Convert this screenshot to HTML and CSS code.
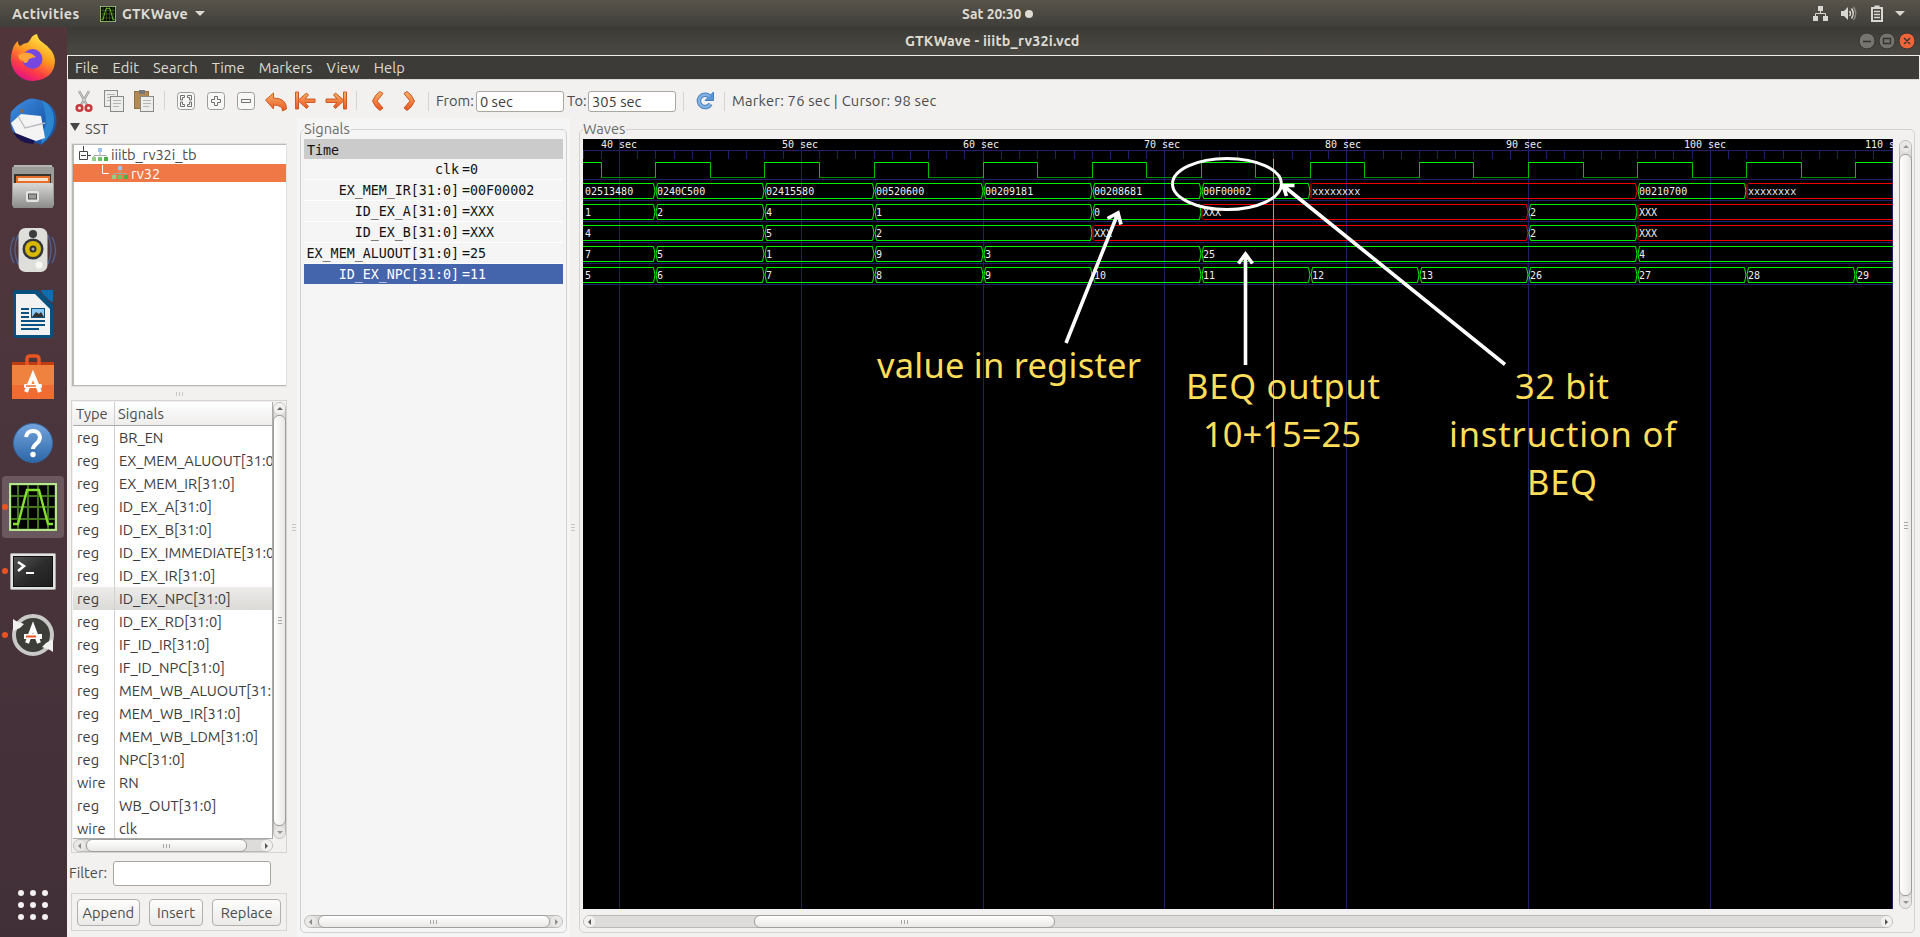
FILE: index.html
```html
<!DOCTYPE html>
<html lang="en">
<head>
<meta charset="utf-8">
<title>GTKWave - iiitb_rv32i.vcd</title>
<link rel="stylesheet" href="styles.css">
</head>
<body>
<svg class="defs" width="0" height="0">
  <defs>
    <linearGradient id="or" x1="0" y1="0" x2="0" y2="1"><stop offset="0" stop-color="#f6b26b"/><stop offset="1" stop-color="#ea5420"/></linearGradient>
    <linearGradient id="gy" x1="0" y1="0" x2="0" y2="1"><stop offset="0" stop-color="#d8d8d6"/><stop offset="1" stop-color="#8b8b89"/></linearGradient>
    <linearGradient id="fx" x1="0.8" y1="0" x2="0.3" y2="1"><stop offset="0" stop-color="#fff44f"/><stop offset=".45" stop-color="#ff9a1f"/><stop offset=".75" stop-color="#ff3b46"/><stop offset="1" stop-color="#e0108a"/></linearGradient>
    <linearGradient id="bl" x1="0" y1="0" x2="0" y2="1"><stop offset="0" stop-color="#74a4dc"/><stop offset="1" stop-color="#2c67a8"/></linearGradient>
    <linearGradient id="tb" x1="0" y1="0" x2="1" y2="1"><stop offset="0" stop-color="#3f8fe0"/><stop offset=".6" stop-color="#1f5fb4"/><stop offset="1" stop-color="#1a4a96"/></linearGradient>
    <linearGradient id="dk" x1="0" y1="0" x2="1" y2="1"><stop offset="0" stop-color="#555"/><stop offset=".5" stop-color="#2c2c2c"/><stop offset="1" stop-color="#1c1c1c"/></linearGradient>
    <g id="hier"><path d="M8 5v3M2 10V8.5h12V10" stroke="#aaa" fill="none"/><rect x="6" y="1" width="4" height="4" fill="#9cc4ee"/><rect x="0" y="10" width="4" height="4" fill="#90cf84"/><rect x="6" y="10" width="4" height="4" fill="#6fc463"/><rect x="12" y="10" width="4" height="4" fill="#4fae48"/></g>
    <g id="wave"><rect x="1" y="1" width="46" height="46" fill="#000" stroke="#b5e68c" stroke-width="2.4"/><path d="M9 2v44M19 2v44M29 2v44M39 2v44M2 13h44M2 24h44M2 36h44" stroke="#43761c" stroke-width="2"/><path d="M4 41h5L18 7h12l9 34h5" fill="none" stroke="#84e030" stroke-width="2.4"/></g>
  </defs>
</svg>

<header class="topbar">
  <span class="activities">Activities</span>
  <svg class="app-icon" width="16" height="16" viewBox="0 0 48 48"><use href="#wave"/></svg>
  <span class="app-name">GTKWave</span>
  <i class="caret"></i>
  <div class="clock">Sat 20:30<i class="dot"></i></div>
  <svg class="tray" width="100" height="20" viewBox="0 0 100 20">
    <g fill="#d9d7d2"><rect x="8" y="2" width="5" height="5"/><rect x="3" y="12" width="5" height="5"/><rect x="13" y="12" width="5" height="5"/><path d="M31 7h3l4-4v13l-4-4h-3z"/><path d="M85 7h10l-5 5z"/></g>
    <path d="M10.500 7v3M5.500 12v-2.500h10V12" fill="none" stroke="#d9d7d2"/>
    <path d="M39.500 7q2 2.500 0 5M41.500 4.500q3.500 5 0 10" fill="none" stroke="#d9d7d2" stroke-width="1.500"/><path d="M43.500 3q4.500 6.500 0 13" fill="none" stroke="#8a8882" stroke-width="1.500"/>
    <path d="M62 4h10v13H62zM64.500 2.500h5" fill="none" stroke="#d9d7d2" stroke-width="2"/><path d="M64 7.500h6M64 10.500h6M64 13.500h6" stroke="#d9d7d2" stroke-width="1.500"/>
  </svg>
</header>

<div class="desktop">
<nav class="dock">
  <div class="app"><svg width="48" height="48" viewBox="0 0 48 48">
    <path d="M24 47A22 22 0 0 1 3 18Q4 11 9 7q0 4 2 5q4-3 7-3q2-1 3-3q2-5 7-6q1 5 5 8q12 8 13 18q0 19-22 21z" fill="url(#fx)"/><circle cx="23.500" cy="25" r="10" fill="#7748e0"/><path d="M9 21q8-4 14-1l4 3q-5 1-7 2q-3 7-6 2q-5-1-5-6z" fill="#ffa436"/></svg></div>
  <div class="app"><svg width="48" height="48" viewBox="0 0 48 48">
    <path d="M2 14Q9 6 14 4q6-5 13-3q17 3 20 17q2 12-5 20q-4 5-10 9l-4-2Q-3 44 2 14z" fill="url(#tb)"/><path d="M33 2q12 7 12 19q0 16-13 25l2-12q6-10-1-32z" fill="#2c86cf"/><path d="M2 25l10-9 20 2 4 22-9 3L7 36z" fill="#f4f4f4"/><path d="M9 18l7 12 20-5" fill="none" stroke="#b9bcc0" stroke-width="1.300"/><path d="M4 34l22 9-2 3Q9 45 4 34z" fill="#1b1450"/><circle cx="13" cy="13" r="2" fill="#8a6a4a"/></svg></div>
  <div class="app"><svg width="48" height="48" viewBox="0 0 48 48">
    <path d="M5 3h38l2 13H3z" fill="#b5b5b3"/><rect x="3" y="5" width="42" height="39" rx="1" fill="#9a9a98"/><path d="M5 12h37v10H5z" fill="#3a342f"/><path d="M7 14h34v7H7z" fill="#e46f2c"/><path d="M9 16h30v3H9z" fill="#f6e2cf"/><rect x="4" y="21" width="40" height="25" rx="1" fill="url(#gy)"/><rect x="17" y="29" width="13" height="11" rx="2" fill="#e4e4e2"/><rect x="19.500" y="32" width="8" height="5" fill="#9b9b99" stroke="#555"/></svg></div>
  <div class="app"><svg width="48" height="48" viewBox="0 0 48 48">
    <path d="M5 11q-7 13 0 26M9 9q-6 14 0 29M43 11q7 13 0 26M39 9q6 14 0 29" fill="none" stroke="#4f5f8c" stroke-width="1.500"/><rect x="9.500" y="2" width="29" height="44" rx="7" fill="#dededb"/><circle cx="24" cy="23" r="10.500" fill="#34363a"/><circle cx="24" cy="23" r="8" fill="#d9b800"/><circle cx="24" cy="23" r="3.500" fill="#333"/><circle cx="24" cy="23" r="1.500" fill="#aaa"/><circle cx="30" cy="39" r="3.500" fill="#f7f7f5"/><circle cx="24" cy="8" r="4" fill="#3c3c3c"/></svg></div>
  <div class="app"><svg width="48" height="48" viewBox="0 0 48 48">
    <path d="M7 0h22l15 15v30q0 3-3 3H7q-3 0-3-3V3q0-3 3-3z" fill="#08507e"/><path d="M32 0h12v12q-2 0-4-2l-6-6q-2-2-2-4z" fill="#0e6fae"/><path d="M7 4h19l15 15v26H7z" fill="#f2f2f2"/><path d="M12 19h8M12 23h8M12 27h8M12 31h24M12 35h24M12 39h18" stroke="#0c5180" stroke-width="2"/><rect x="22.500" y="18.500" width="13" height="9" fill="#8dc8f2" stroke="#0c5180"/><path d="M23 27l4-5 3 2 2-2 3 5z" fill="#333"/></svg></div>
  <div class="app"><svg width="48" height="48" viewBox="0 0 48 48">
    <path d="M3 8h42v8H3z" fill="#c03c12"/><path d="M18 14V5q0-3 3-3h6q3 0 3 3v9" fill="none" stroke="#e95420" stroke-width="3.500"/><rect x="3" y="11" width="42" height="34" fill="#f0823f"/><path d="M3 31h42v14H3z" fill="#f06c33"/><path d="M17 38L24 21l7 17" fill="none" stroke="#fff" stroke-width="4"/><rect x="15" y="30" width="18" height="4" rx="1" fill="#fff"/><path d="M17 32h10" stroke="#f06c33" stroke-width="1.500"/></svg></div>
  <div class="app"><svg width="48" height="48" viewBox="0 0 48 48">
    <circle cx="24" cy="24" r="19.500" fill="url(#bl)" stroke="#326aa6"/><path d="M17 18q1-6 7-6t7 6q0 4-4 7q-3 3-3 5" fill="none" stroke="#fff" stroke-width="4"/><circle cx="24" cy="35.500" r="2.700" fill="#fff"/></svg></div>
  <div class="app running active"><svg width="48" height="48" viewBox="0 0 48 48"><use href="#wave"/></svg></div>
  <div class="app running"><svg width="48" height="48" viewBox="0 0 48 48">
    <rect x="1.500" y="6.500" width="45" height="36" rx="1" fill="#e2e2e0" stroke="#a5a5a3"/><rect x="4.500" y="9.500" width="39" height="30" fill="url(#dk)" stroke="#111"/><path d="M9 15l6 4-6 5" fill="none" stroke="#fff" stroke-width="2.500"/><path d="M17 26h8" stroke="#fff" stroke-width="2"/></svg></div>
  <div class="app running"><svg width="48" height="48" viewBox="0 0 48 48">
    <circle cx="24" cy="24" r="19" fill="#3d3d39" stroke="#c9c9c7" stroke-width="4"/><path d="M4 8l3 2 8 3-4 4-7 3zM44 41l-3-2-8-3 4-4 7-4z" fill="#f0f0ee"/><path d="M18 32l6-16 6 16" fill="none" stroke="#fff" stroke-width="4"/><rect x="15" y="23" width="18" height="5" fill="#fff"/><path d="M17 25.500h10" stroke="#e95420" stroke-width="2"/></svg></div>
  <svg class="launcher" width="32" height="32" viewBox="0 0 32 32" fill="#f2f0f0"><circle cx="4" cy="4" r="3"/><circle cx="16" cy="4" r="3"/><circle cx="28" cy="4" r="3"/><circle cx="4" cy="16" r="3"/><circle cx="16" cy="16" r="3"/><circle cx="28" cy="16" r="3"/><circle cx="4" cy="28" r="3"/><circle cx="16" cy="28" r="3"/><circle cx="28" cy="28" r="3"/></svg>
</nav>

<main class="window">
  <div class="titlebar"><span class="title">GTKWave - iiitb_rv32i.vcd</span>
    <svg class="win-buttons" width="60" height="20" viewBox="0 0 60 20"><g stroke="#35342f"><circle cx="10" cy="10" r="8" fill="#75746e"/><circle cx="30" cy="10" r="8" fill="#75746e"/><circle cx="50" cy="10" r="8" fill="#f0643a"/></g><path d="M6 10.500h8M26.500 7.500h7v5h-7zM47 7l6 6M53 7l-6 6" fill="none" stroke="#33322e" stroke-width="1.300"/></svg>
  </div>
  <div class="menubar"><span>File</span><span>Edit</span><span>Search</span><span>Time</span><span>Markers</span><span>View</span><span>Help</span></div>

  <div class="toolbar">
    <svg width="352" height="24" viewBox="0 0 352 24">
      <path d="M9 2l8 14M19 2l-8 14" stroke="#8e8e8c" stroke-width="2.400"/><path d="M9 2l8 14M19 2l-8 14" stroke="#d8d8d6" stroke-width="1"/><g fill="none" stroke="#c8393b" stroke-width="2.600"><circle cx="9.500" cy="19" r="2.800"/><circle cx="18.500" cy="19" r="2.800"/></g>
      <g stroke="#888a85" fill="#ededeb"><rect x="34.500" y="1.500" width="13" height="16"/><rect x="40.500" y="7.500" width="13" height="15"/></g><path d="M37 5.500h8M37 8.500h3M37 11.500h3M43 11.500h8M43 14.500h8M43 17.500h6" stroke="#b4b4b2"/>
      <rect x="64.500" y="2.500" width="14" height="17" fill="#b38a54" stroke="#93703e"/><rect x="69" y="1" width="6" height="4" fill="#777"/><rect x="70.500" y="7.500" width="13" height="15" fill="#ededeb" stroke="#888a85"/><path d="M73 11.500h8M73 14.500h8M73 17.500h6" stroke="#b4b4b2"/>
      <path d="M94.500 2v19M286.500 2v19" stroke="#d5d3d0"/>
      <g fill="#f8f8f7" stroke="#9b9d99"><rect x="107.500" y="3.500" width="17" height="17" rx="3"/><rect x="137.500" y="3.500" width="17" height="17" rx="3"/><rect x="167.500" y="3.500" width="17" height="17" rx="3"/></g>
      <g fill="none" stroke="#6f716d"><path d="M110.500 11V6.500h4v2h-2V11zM121.500 11V6.500h-4v2h2V11zM110.500 13v4.500h4v-2h-2V13zM121.500 13v4.500h-4v-2h2V13z"/><path d="M144.500 7.500h3v3h3v3h-3v3h-3v-3h-3v-3h3zM171.500 10.500h9v3h-9z"/></g>
      <g fill="url(#or)" stroke="#cf5a24"><path d="M195.500 11l8-7v5q13 0 13 11l-4 2q0-6-9-6v4z"/><path d="M225.500 3h3v8l8-7 2 2-3.500 4h10v3.500h-10l3.500 4-2 2-8-7.500v8h-3z"/><path d="M276.500 3h-3v8l-8-7-2 2 3.500 4h-11v3.500h11l-3.500 4 2 2 8-7.500v8h3z"/><path d="M310 2.500l3 2-6 7.500 6 7-3 2.500q-5-3-7.500-9.500q3-7 7.500-9.500zM337 2.500l-3 2 6 7.500-6 7 3 2.500q5-3 7.500-9.500q-3-7-7.500-9.500z"/></g>
    </svg>
    <i class="sep"></i><span class="from">From:</span><span class="entry">0 sec</span><span class="to">To:</span><span class="entry">305 sec</span>
    <i class="sep s2"></i>
    <svg class="reload" width="20" height="20" viewBox="0 0 20 20"><path d="M14.500 5.500A6.200 6.200 0 1 0 15.500 13" fill="none" stroke="#4580c0" stroke-width="4.500"/><path d="M10 9.500h8.500V1z" fill="#5b94d2" stroke="#4580c0"/><path d="M14.500 5.500A6.200 6.200 0 1 0 15.500 13" fill="none" stroke="#83b2e2" stroke-width="2.500"/></svg>
    <i class="sep s3"></i><span class="status">Marker: 76 sec | Cursor: 98 sec</span>
  </div>

  <div class="panes">
    <section class="left">
      <div class="sst"><i class="tri"></i>SST</div>
      <div class="tree">
        <div class="node"><svg width="13" height="17" viewBox="0 0 13 17"><path d="M5.500 0v5M10 9.500h3M1.500 5.500h8v8h-8zM3 9.500h5" fill="none" stroke="#444"/></svg><svg class="h" width="16" height="16" viewBox="0 0 16 16"><use href="#hier"/></svg><span>iiitb_rv32i_tb</span></div>
        <div class="node sel"><svg width="33" height="17" viewBox="0 0 33 17"><path d="M25.500 0v8.500H32" fill="none" stroke="#fff"/></svg><svg class="h" width="16" height="16" viewBox="0 0 16 16"><use href="#hier"/></svg><span class="rv">rv32</span></div>
      </div>
      <div class="grip-h"></div>
      <div class="table">
        <div class="cols">
          <div class="list">
            <div class="row head"><b>Type</b><span>Signals</span></div>
            <div class="row"><b>reg</b><span>BR_EN</span></div>
            <div class="row"><b>reg</b><span>EX_MEM_ALUOUT[31:0]</span></div>
            <div class="row"><b>reg</b><span>EX_MEM_IR[31:0]</span></div>
            <div class="row"><b>reg</b><span>ID_EX_A[31:0]</span></div>
            <div class="row"><b>reg</b><span>ID_EX_B[31:0]</span></div>
            <div class="row"><b>reg</b><span>ID_EX_IMMEDIATE[31:0]</span></div>
            <div class="row"><b>reg</b><span>ID_EX_IR[31:0]</span></div>
            <div class="row picked"><b>reg</b><span>ID_EX_NPC[31:0]</span></div>
            <div class="row"><b>reg</b><span>ID_EX_RD[31:0]</span></div>
            <div class="row"><b>reg</b><span>IF_ID_IR[31:0]</span></div>
            <div class="row"><b>reg</b><span>IF_ID_NPC[31:0]</span></div>
            <div class="row"><b>reg</b><span>MEM_WB_ALUOUT[31:0]</span></div>
            <div class="row"><b>reg</b><span>MEM_WB_IR[31:0]</span></div>
            <div class="row"><b>reg</b><span>MEM_WB_LDM[31:0]</span></div>
            <div class="row"><b>reg</b><span>NPC[31:0]</span></div>
            <div class="row"><b>wire</b><span>RN</span></div>
            <div class="row"><b>reg</b><span>WB_OUT[31:0]</span></div>
            <div class="row"><b>wire</b><span>clk</span></div>
          </div>
          <div class="vscroll"><i class="up"></i><i class="thumb"></i><i class="down dim"></i></div>
        </div>
        <div class="hscroll table-h"><i class="lt dim"></i><i class="thumb"></i><i class="rt"></i></div>
      </div>
      <div class="filter"><span>Filter:</span><i class="filter-entry"></i></div>
      <div class="buttons"><span>Append</span><span>Insert</span><span>Replace</span></div>
    </section>
    <div class="grip-v"></div>
    <section class="signals">
      <fieldset><legend>Signals</legend>
        <div class="siglist">
          <div class="time">Time</div>
          <div class="sig"><b>clk</b><span>=0</span></div>
          <div class="sig"><b>EX_MEM_IR[31:0]</b><span>=00F00002</span></div>
          <div class="sig"><b>ID_EX_A[31:0]</b><span>=XXX</span></div>
          <div class="sig"><b>ID_EX_B[31:0]</b><span>=XXX</span></div>
          <div class="sig"><b>EX_MEM_ALUOUT[31:0]</b><span>=25</span></div>
          <div class="sig chosen"><b>ID_EX_NPC[31:0]</b><span>=11</span></div>
        </div>
        <div class="hscroll sig-h"><i class="lt dim"></i><i class="thumb"></i><i class="rt dim"></i></div>
      </fieldset>
    </section>
    <div class="grip-v g2"></div>
    <section class="waves">
      <fieldset><legend>Waves</legend>
        <div class="wave-area">
          <svg id="canvas" class="canvas" width="1310" height="770" viewBox="583 139 1310 770"></svg>
          <div class="vscroll wave-v"><i class="up dim"></i><i class="thumb"></i><i class="down dim"></i></div>
        </div>
        <div class="hscroll wave-h"><i class="lt"></i><i class="thumb"></i><i class="rt"></i></div>
      </fieldset>
    </section>
  </div>
</main>
</div>
<script src="waves.js"></script>
</body>
</html>
```

FILE: styles.css
```css
* { box-sizing: border-box; }
html, body { height: 100%; }
body { margin: 0; overflow: hidden; background: #f2f1f0; color: #4c4c4c; font: 14.670px/20px Ubuntu, "Noto Sans", "Open Sans", sans-serif; white-space: nowrap; }
b, i { font-weight: normal; font-style: normal; }
svg { display: block; flex: none; }
.defs { position: absolute; }

.topbar { position: relative; height: 27px; display: flex; align-items: center; padding-left: 12px; background: linear-gradient(#58544c, #3f3e39); color: #dfdbd2; font-weight: bold; font-size: 14.300px; }
.activities { width: 88px; letter-spacing: .4px; }
.app-icon { margin-right: 6px; }
.app-name { width: 73px; letter-spacing: .2px; }
.caret { border: 5px solid transparent; border-top-color: #dfdbd2; border-bottom: 0; }
.clock { position: absolute; left: 962px; display: flex; align-items: center; gap: 4px; font-size: 13.800px; }
.dot { width: 8px; height: 8px; border-radius: 50%; background: #dfdbd2; }
.tray { margin-left: auto; margin-right: 10px; }

.desktop { display: flex; height: 910px; }
.dock { width: 67px; display: flex; flex-direction: column; background: linear-gradient(#50363b, #4b353c 45%, #412f37); }
.app { height: 62px; margin: 0 3px 2.100px 2px; display: flex; align-items: center; justify-content: center; border-radius: 4px; position: relative; }
.app.active { background: #6b585e; }
.running::before { content: ""; position: absolute; left: 0; top: 28px; width: 6px; height: 6px; border-radius: 50%; background: #e95420; }
.launcher { margin: auto 0 16px 17px; }

.window { flex: 1; display: flex; flex-direction: column; min-width: 0; }
.titlebar { height: 28px; display: flex; align-items: center; background: linear-gradient(#3b3a36, #4b4942); color: #dfdbd2; font-weight: bold; font-size: 14.300px; letter-spacing: .2px; padding-right: 3px; }
.title { margin-left: 838px; margin-top: -1px; }
.win-buttons { margin-left: auto; }
.menubar { height: 25px; border-top: 1px solid #f0efed; border-bottom: 1px solid #dedbd8; border-right: 1px solid #f0efed; margin-left: 1px; padding-left: 7px; display: flex; background: #3c3b37; color: #dfdbd2; line-height: 24px; gap: 14px; letter-spacing: .1px; }

.toolbar { height: 38px; display: flex; align-items: center; padding: 4px 0 0 3px; }
.sep { width: 1px; height: 19px; margin-left: 6px; background: #d5d3d0; }
.from { width: 40px; margin-left: 7px; }
.entry { width: 88px; height: 21px; border: 1px solid #aaa7a1; border-radius: 3px; background: #fff; padding-left: 3px; color: #3c3c3c; }
.to { margin-left: 3px; width: 21px; }
.s2 { margin-left: 7px; }
.reload { margin-left: 11px; }
.s3 { margin-left: 9px; }
.status { margin-left: 7px; letter-spacing: .25px; }

.panes { flex: 1; display: flex; min-height: 0; }
.left { width: 224px; padding-left: 4px; }
.sst { display: flex; height: 25px; padding-top: 1px; }
.tri { border: 5px solid transparent; border-top: 8px solid #444; border-bottom: 0; margin: 4px 5px 0 -1px; }
.tree { width: 216px; height: 244px; background: #fff; border: 2px solid #bbb9b6; outline: 1px solid #e3e1df; outline-offset: -1px; border-width: 2px 1px 2px 3px; }
.node { display: flex; height: 19px; padding-left: 4px; align-items: center; color: #4c4c4c; letter-spacing: -.1px; }
.node .h { margin: 0 3px 0 1px; }
.sel { height: 18px; margin-left: -1px; background: #f07746; color: #fff; line-height: 17px; }
.sel .h { margin-left: 2px; }
.grip-h { height: 13px; background: repeating-linear-gradient(90deg, #c9c6c3 0 1px, transparent 1px 3px) 105px 5px / 8px 4px no-repeat; }
.table { width: 216px; height: 453px; border: 1px solid #d6d3d0; padding: 1px 0 0 1px; }
.cols { display: flex; height: 437px; }
.list { width: 200px; overflow: hidden; background: #fff; border-right: 1px solid #aaa; border-bottom: 1px solid #aaa; }
.row { display: flex; height: 23px; line-height: 23px; color: #3c3c3c; }
.row b { width: 42px; flex: none; padding-left: 4px; border-right: 1px solid #d0d0d0; }
.row span { padding-left: 4px; }
.head { height: 24px; background: linear-gradient(#fff, #eeedec); border-bottom: 1px solid #aaa; line-height: 24px; color: #4c4c4c; }
.head span { padding-left: 3px; }
.head b { padding-left: 3px; }
.picked { background: linear-gradient(#edecea, #dcdad7); }

.vscroll, .hscroll { display: flex; border: 1px solid #bbb9b6; border-radius: 7px; background: #dedcda; }
.vscroll { flex-direction: column; width: 13px; }
.hscroll { height: 13px; }
.thumb { flex: none; border: 1px solid #a09e9a; border-radius: 6px; background: #f6f5f4; }
.vscroll .thumb { width: 13px; margin-left: -1px; background: repeating-linear-gradient(#a8a6a3 0 1px, transparent 1px 3px) center / 4px 7px no-repeat, linear-gradient(90deg, #fff, #e9e8e6); }
.hscroll .thumb { height: 13px; margin-top: -1px; background: repeating-linear-gradient(90deg, #a8a6a3 0 1px, transparent 1px 3px) center / 8px 4px no-repeat, linear-gradient(#fff, #e9e8e6); }
.up, .down, .lt, .rt { flex: none; display: flex; align-items: center; justify-content: center; width: 11px; height: 11px; border-radius: 5px; background: #f2f1f0; }
.up::before, .down::before, .lt::before, .rt::before { content: ""; border: 3px solid transparent; }
.up::before { border-bottom-color: #666; border-top: 0; }
.down::before { border-top-color: #666; border-bottom: 0; }
.lt::before { border-right-color: #555; border-left: 0; }
.rt::before { border-left-color: #555; border-right: 0; }
.dim { opacity: .6; }
.down { margin-top: auto; }
.rt { margin-left: auto; }
.table .vscroll .thumb { height: 411px; margin-top: 1px; }
.table-h { width: 200px; }
.table-h .thumb { width: 161px; margin-left: 1px; }

.filter { display: flex; align-items: center; height: 40px; }
.filter span { width: 43px; margin-left: -2px; }
.filter-entry { width: 158px; height: 25px; margin-left: 1px; border: 1px solid #aaa7a1; border-radius: 3px; background: #fff; }
.buttons { display: flex; width: 216px; height: 38px; border: 1px solid #d6d3d0; padding: 5px; }
.buttons span { height: 27px; width: 63px; line-height: 26px; text-align: center; border: 1px solid #b3b0ac; border-radius: 4px; background: linear-gradient(#fdfdfd, #ebeae8); }
.buttons span:nth-child(2) { width: 55px; margin: 0 9px; }
.buttons span:nth-child(3) { width: 69px; }

.grip-v { width: 6px; background: repeating-linear-gradient(#c9c6c3 0 1px, transparent 1px 3px) 1px 406px / 4px 7px no-repeat; }
fieldset { margin: 0; min-width: 0; border: 1px solid #d4d2d0; border-radius: 5px; height: 814px; padding: 0 3px; }
legend { padding: 0 1px 0 0; height: 20px; line-height: 20px; color: #6a6a6a; }
.signals { width: 273px; padding: 1px 3px 0; background: #f5f5f5; }
.siglist { height: 776px; font: 13.330px/20px "DejaVu Sans Mono", monospace; color: #111; }
.time { height: 20px; padding: 2px 0 0 3px; background: #cbcbcb; }
.sig { display: flex; height: 21px; padding-top: 1px; border-bottom: 1px solid #fff; }
.sig b { width: 155px; text-align: right; }
.sig span { padding-left: 3px; }
.chosen { height: 20px; background: #4464ac; border: 0; color: #fff; }
.sig-h .thumb { width: 232px; margin-left: 2px; }
.g2 { width: 9px; }
.waves { flex: 1; min-width: 0; padding-top: 1px; }
.waves fieldset { width: 1336px; }
.wave-area { display: flex; height: 776px; }
.canvas { background: #000; }
.wave-v { margin: 1px 0 6px 6px; }
.wave-v .thumb { height: 742px; margin-top: 2px; }
.wave-h { width: 1310px; }
.wave-h .thumb { width: 301px; margin-left: 159px; }

.wave-text { font: 10px "DejaVu Sans Mono", monospace; fill: #f0f0f0; }
.note { font: 34.500px "Noto Sans", sans-serif; fill: #ffde59; }
```

FILE: waves.js
```js
const svg = document.getElementById('canvas');
const NS = 'http://www.w3.org/2000/svg';
const LEFT = 583, RIGHT = 1893;
const GREEN = '#00f000', RED = '#f00000', GRID = '#20206a';

function add(tag, attrs, text) {
  const el = document.createElementNS(NS, tag);
  for (const k in attrs) el.setAttribute(k, attrs[k]);
  if (text !== undefined) el.textContent = text;
  svg.appendChild(el);
}
const px = t => Math.floor(619.5 + 18.18 * (t - 40));
const line = (d, stroke, w = 1) => add('path', { d, stroke, 'stroke-width': w, fill: 'none' });
const label = (x, y, s) => add('text', { x, y, class: 'wave-text' }, s);

// Time ruler and grid
line(`M${LEFT} 150.5H${RIGHT}`, GRID);
for (let t = 38; t <= 110; t++) line(`M${px(t) + .5} 151V159`, GRID);
for (let t = 40; t <= 110; t += 10) line(`M${px(t) + .5} 139V909`, GRID);
for (let y = 179; y <= 284; y += 21) line(`M${LEFT} ${y + .5}H${RIGHT}`, GRID);
[601, 782, 963, 1144, 1325, 1506, 1684, 1865].forEach((x, i) => label(x, 148, `${40 + i * 10} sec`));

// Clock
line(`M${LEFT} 162.5H${px(39) + 1}`, GREEN);
for (let t = 39; t < 111; t += 6) {
  const a = px(t) + .5, b = px(t + 3) + .5, c = Math.min(px(t + 6) + .5, RIGHT);
  line(`M${a} 162V178`, '#00c000');
  line(`M${a} 177.5H${b}`, '#008a00');
  if (b < RIGHT) { line(`M${b} 162V178`, '#00c000'); line(`M${b} 162.5H${c}`, GREEN); }
}

// Buses: [start time, value]
const buses = [
  [[38, '02513480'], [42, '0240C500'], [48, '02415580'], [54, '00520600'], [60, '00209181'], [66, '00208681'], [72, '00F00002'], [78, 'xxxxxxxx'], [96, '00210700'], [102, 'xxxxxxxx']],
  [[38, '1'], [42, '2'], [48, '4'], [54, '1'], [66, '0'], [72, 'XXX'], [90, '2'], [96, 'XXX']],
  [[38, '4'], [48, '5'], [54, '2'], [66, 'XXX'], [90, '2'], [96, 'XXX']],
  [[38, '7'], [42, '5'], [48, '1'], [54, '9'], [60, '3'], [72, '25'], [96, '4']],
  [[38, '5'], [42, '6'], [48, '7'], [54, '8'], [60, '9'], [66, '10'], [72, '11'], [78, '12'], [84, '13'], [90, '26'], [96, '27'], [102, '28'], [108, '29']]
];
buses.forEach((bus, r) => {
  const top = 183.5 + r * 21, bot = top + 15, mid = top + 7.5;
  bus.forEach(([t, v], i) => {
    const color = /^x/i.test(v) ? RED : GREEN;
    const a = i ? px(t) + .5 : LEFT;
    const last = i === bus.length - 1;
    const b = last ? RIGHT : px(bus[i + 1][0]) + .5;
    const s = i ? a + 2 : a, e = last ? b : b - 2;
    line(`M${s} ${top}H${e}M${s} ${bot}H${e}`, color);
    if (i) line(color === RED ? `M${a + .5} ${top}V${bot}` : `M${s} ${top}L${a + .5} ${mid}L${s} ${bot}`, color);
    if (!last) line(`M${e} ${top}L${b - .5} ${mid}L${e} ${bot}`, color);
    label(i ? a + 1.5 : LEFT + 2, top + 11.5, v);
  });
});

// Marker
line('M1273.5 159V909', '#ff7b7b');

// Annotations
add('ellipse', { cx: 1227, cy: 184, rx: 54.5, ry: 25.5, fill: 'none', stroke: '#fff', 'stroke-width': 3 });
['M1066 343L1118 213M1107.500 218.500L1118 213L1121 224.500',
 'M1245.500 365V254M1238.500 263.500L1245.500 254L1252.500 263.500',
 'M1505 364.500L1283 185.500M1294.500 185.500L1283 185.500L1286.500 196'].forEach(d =>
  add('path', { d, fill: 'none', stroke: '#fff', 'stroke-width': 3.6 }));
[[877, 378, 264, 'value in register'], [1186, 399, 194, 'BEQ output'], [1203, 447, 158, '10+15=25'],
 [1515, 399, 94, '32 bit'], [1449, 447, 227, 'instruction of'], [1527, 495, 70, 'BEQ']].forEach(([x, y, w, s]) =>
  add('text', { x, y, textLength: w, class: 'note' }, s));
```
